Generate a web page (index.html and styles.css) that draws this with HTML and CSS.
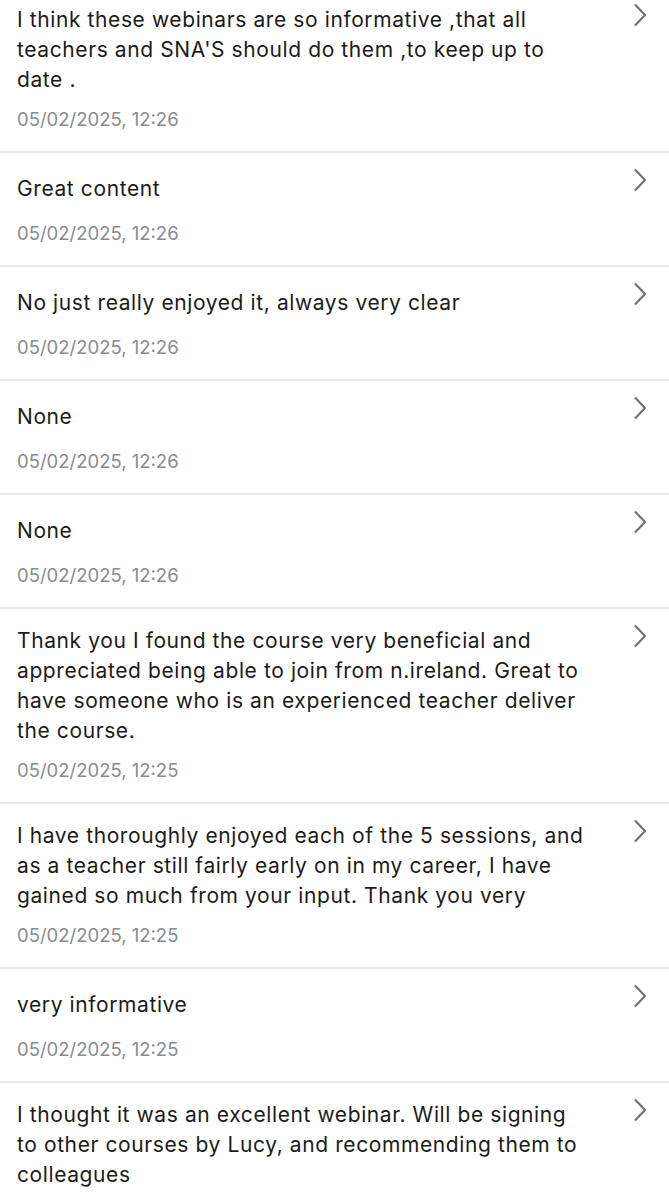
FILE: index.html
```html
<!DOCTYPE html>
<html lang="en">
  <head>
    <meta charset="UTF-8" />
    <meta name="viewport" content="width=device-width, initial-scale=1.0" />
    <title>Responses</title>
    <link rel="stylesheet" href="styles.css">
  </head>
  <body>
    <div class="list">
      <div class="row">
        <div class="body">
          <p class="answer">I think these webinars are so informative ,that all teachers and SNA'S should do them ,to keep up to date .</p>
          <div class="date">05/02/2025, 12:26</div>
        </div>
        <svg class="chev" width="12" height="24" viewBox="0 0 12 24"><path d="M1 1.5 L11 12 L1 22.5" /></svg>
      </div>

      <div class="row single">
        <div class="body">
          <p class="answer">Great content</p>
          <div class="date">05/02/2025, 12:26</div>
        </div>
        <svg class="chev" width="12" height="24" viewBox="0 0 12 24"><path d="M1 1.5 L11 12 L1 22.5" /></svg>
      </div>

      <div class="row single">
        <div class="body">
          <p class="answer">No just really enjoyed it, always very clear</p>
          <div class="date">05/02/2025, 12:26</div>
        </div>
        <svg class="chev" width="12" height="24" viewBox="0 0 12 24"><path d="M1 1.5 L11 12 L1 22.5" /></svg>
      </div>

      <div class="row single">
        <div class="body">
          <p class="answer">None</p>
          <div class="date">05/02/2025, 12:26</div>
        </div>
        <svg class="chev" width="12" height="24" viewBox="0 0 12 24"><path d="M1 1.5 L11 12 L1 22.5" /></svg>
      </div>

      <div class="row single">
        <div class="body">
          <p class="answer">None</p>
          <div class="date">05/02/2025, 12:26</div>
        </div>
        <svg class="chev" width="12" height="24" viewBox="0 0 12 24"><path d="M1 1.5 L11 12 L1 22.5" /></svg>
      </div>

      <div class="row">
        <div class="body">
          <p class="answer">Thank you I found the course very beneficial and appreciated being able to join from n.ireland. Great to have someone who is an experienced teacher deliver the course.</p>
          <div class="date">05/02/2025, 12:25</div>
        </div>
        <svg class="chev" width="12" height="24" viewBox="0 0 12 24"><path d="M1 1.5 L11 12 L1 22.5" /></svg>
      </div>

      <div class="row">
        <div class="body">
          <p class="answer">I have thoroughly enjoyed each of the 5 sessions, and as a teacher still fairly early on in my career, I have gained so much from your input. Thank you very</p>
          <div class="date">05/02/2025, 12:25</div>
        </div>
        <svg class="chev" width="12" height="24" viewBox="0 0 12 24"><path d="M1 1.5 L11 12 L1 22.5" /></svg>
      </div>

      <div class="row single">
        <div class="body">
          <p class="answer">very informative</p>
          <div class="date">05/02/2025, 12:25</div>
        </div>
        <svg class="chev" width="12" height="24" viewBox="0 0 12 24"><path d="M1 1.5 L11 12 L1 22.5" /></svg>
      </div>

      <div class="row">
        <div class="body">
          <p class="answer">I thought it was an excellent webinar. Will be signing to other courses by Lucy, and recommending them to colleagues</p>
          <div class="date">05/02/2025, 12:25</div>
        </div>
        <svg class="chev" width="12" height="24" viewBox="0 0 12 24"><path d="M1 1.5 L11 12 L1 22.5" /></svg>
      </div>
    </div>
  </body>
</html>
```

FILE: styles.css
```css
body {
  margin: 0;
  background: #fff;
  font-family: Inter, "Noto Sans", sans-serif;
  color: #1b1b1b;
}
.list {
  margin-top: -12px;
}
.row {
  display: flex;
  align-items: flex-start;
  padding: 17px 23px 20px 17px;
  border-bottom: 2px solid #e8e8e8;
}
.body {
  flex: 1;
}
.answer {
  max-width: 575px;
  margin: 0;
  font-size: 21px;
  line-height: 30px;
  letter-spacing: 0.6px;
}
.date {
  margin-top: 12px;
  font-size: 18.5px;
  line-height: 24px;
  color: #878c91;
}
.row.single .body {
  padding-top: 4px;
}
.row.single .date {
  margin-top: 17px;
}
.chev {
  flex-shrink: 0;
  margin-top: -2px;
}
.chev path {
  fill: none;
  stroke: #6e6e6e;
  stroke-width: 2;
}
```
